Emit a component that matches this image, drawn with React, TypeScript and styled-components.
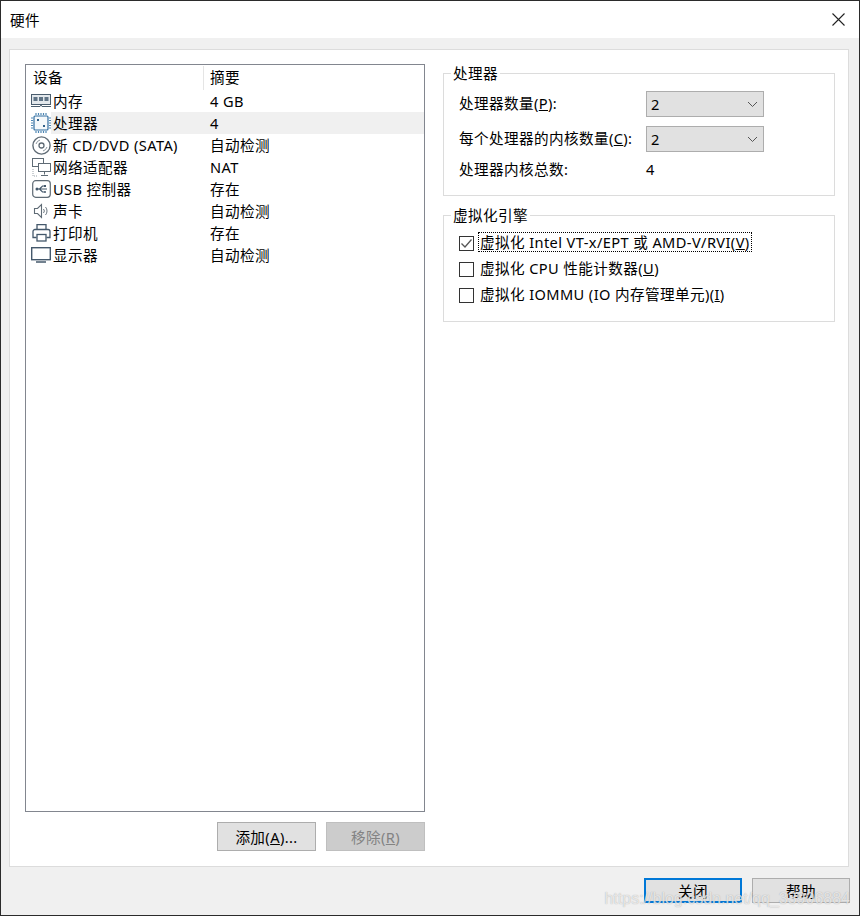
import styled, { createGlobalStyle } from "styled-components";

const GlobalStyle = createGlobalStyle`
  html, body {
    margin: 0;
    padding: 0;
    background: #f0f0f0;
  }
  * {
    box-sizing: border-box;
  }
`;

const Window = styled.div`
  position: relative;
  width: 860px;
  height: 916px;
  display: flex;
  flex-direction: column;
  overflow: hidden;
  background: #f0f0f0;
  border: 1px solid #2b2b2b;
  font-family: "Noto Sans", "Noto Sans CJK SC", sans-serif;
  font-size: 14.6px;
  letter-spacing: 0.4px;
  color: #000;
`;
const TitleBar = styled.div`
  height: 37px;
  flex: none;
  display: flex;
  align-items: center;
  justify-content: space-between;
  padding: 0 14px 0 9px;
  background: #fff;
`;
const CloseIcon = styled.svg`
  width: 13px;
  height: 13px;
  display: block;
`;
const Panel = styled.div`
  margin: 11px 10px 0 8px;
  height: 818px;
  flex: none;
  padding: 14px 13px 15px 15px;
  display: flex;
  gap: 18px;
  background: #fff;
  border: 1px solid #dcdcdc;
`;
const LeftColumn = styled.div`
  width: 400px;
  flex: none;
  display: flex;
  flex-direction: column;
`;
const DeviceList = styled.div`
  flex: 1;
  border: 1px solid #82868f;
  padding-top: 1px;
`;
const ListHeader = styled.div`
  height: 24px;
  display: grid;
  grid-template-columns: 177px 1fr;
`;
const HeaderCell = styled.div<{ $divider?: boolean }>`
  display: flex;
  align-items: center;
  padding-bottom: 3px;
  padding-left: ${(p) => (p.$divider ? "6px" : "7px")};
  border-left: ${(p) => (p.$divider ? "1px solid #e5e5e5" : "none")};
`;
const Row = styled.div`
  height: 22px;
  display: grid;
  grid-template-columns: 25px 1fr;
  align-items: center;
`;
const RowIcon = styled.div`
  display: flex;
  align-items: center;
  justify-content: center;
  height: 22px;
  padding-left: 5px;
`;
const RowBody = styled.div<{ $selected?: boolean }>`
  height: 22px;
  display: grid;
  grid-template-columns: 157px 1fr;
  align-items: center;
  padding: 0 0 2px 2px;
  background: ${(p) => (p.$selected ? "#f0f0f0" : "transparent")};
`;
const ListButtons = styled.div`
  margin-top: 10px;
  display: flex;
  justify-content: flex-end;
  gap: 10px;
`;
const Button = styled.div<{ $disabled?: boolean; $focused?: boolean }>`
  width: 99px;
  height: 29px;
  display: flex;
  align-items: center;
  justify-content: center;
  background: ${(p) => (p.$disabled ? "#cccccc" : "#e1e1e1")};
  color: ${(p) => (p.$disabled ? "#838383" : "#000")};
  border: ${(p) =>
    p.$focused
      ? "2px solid #0078d7"
      : p.$disabled
        ? "1px solid #bfbfbf"
        : "1px solid #adadad"};
`;
const RightColumn = styled.div`
  width: 392px;
  flex: none;
  display: flex;
  flex-direction: column;
  gap: 11px;
  padding-top: 1px;
`;
const GroupBox = styled.fieldset<{ $height: number; $top: number }>`
  margin: 0;
  padding: ${(p) => p.$top}px 15px 0;
  height: ${(p) => p.$height}px;
  border: 1px solid #dcdcdc;
  min-inline-size: 0;
`;
const Legend = styled.legend`
  margin-left: -8px;
  padding: 0 2px;
  line-height: 16px;
`;
const FormRow = styled.div`
  height: 26px;
  margin-bottom: 9px;
  display: grid;
  grid-template-columns: 187px 118px;
  align-items: center;
  white-space: nowrap;
`;
const TotalRow = styled(FormRow)`
  height: 18px;
  margin-bottom: 0;
`;
const FormLabel = styled.span`
  padding-bottom: 2px;
  line-height: 16px;
`;
const Combo = styled.div`
  height: 26px;
  display: flex;
  align-items: center;
  justify-content: space-between;
  padding: 0 5px 0 4px;
  background: #e1e1e1;
  border: 1px solid #adadad;
`;
const CheckRow = styled.div`
  height: 26px;
  display: flex;
  align-items: center;
  gap: 5px;
`;
const CheckBox = styled.div`
  width: 15px;
  height: 15px;
  flex: none;
  display: flex;
  align-items: center;
  justify-content: center;
  background: #fff;
  border: 1px solid #333;
`;
const CheckLabel = styled.span<{ $focused?: boolean }>`
  margin-bottom: 2px;
  padding: 0 1px;
  line-height: 18px;
  white-space: pre;
  outline: ${(p) => (p.$focused ? "1px dotted #000" : "none")};
`;
const Footer = styled.div`
  flex: 1;
  display: flex;
  justify-content: flex-end;
  gap: 10px;
  padding: 11px 9px 0 0;
`;
const FooterButton = styled(Button)`
  width: 98px;
  height: 25px;
`;
const Watermark = styled.div`
  position: absolute;
  right: 9px;
  bottom: 7px;
  font-family: "Liberation Sans", sans-serif;
  font-size: 16px;
  letter-spacing: 0;
  color: rgba(255, 255, 255, 0.7);
  text-shadow: 0 0 1px rgba(110, 110, 110, 0.6);
  white-space: nowrap;
`;

const Memory = () => (
  <svg width="20" height="14" viewBox="0 0 20 14" fill="none">
    <rect x="0.5" y="0.5" width="19" height="10" fill="#e3e8ec" stroke="#4a5d6e" />
    <rect x="2.500" y="3" width="4" height="4" fill="#5f7385" />
    <rect x="8" y="3" width="4" height="4" fill="#5f7385" />
    <rect x="13.500" y="3" width="4" height="4" fill="#5f7385" />
    <path d="M0 12.500h9l1-1.500 1 1.500h9" stroke="#4a5d6e" />
  </svg>
);
const Cpu = () => (
  <svg width="20" height="20" viewBox="0 0 20 20" fill="none">
    <rect x="3" y="3" width="14" height="14" rx="1" fill="#f4f8fb" stroke="#2f6da0" strokeWidth="1.200" />
    <path
      d="M5 0v2M7.500 0v2M10 0v2M12.500 0v2M15 0v2M5 18v2M7.500 18v2M10 18v2M12.500 18v2M15 18v2M0 5h2M0 7.500h2M0 10h2M0 12.500h2M0 15h2M18 5h2M18 7.500h2M18 10h2M18 12.500h2M18 15h2"
      stroke="#4d86b3"
      strokeWidth="1.200"
    />
    <rect x="6" y="6" width="2" height="2" fill="#2f5f88" />
    <rect x="12" y="12" width="2" height="2" fill="#2f5f88" />
  </svg>
);
const Disc = () => (
  <svg width="19" height="19" viewBox="0 0 19 19" fill="none">
    <circle cx="9.500" cy="9.500" r="8.600" fill="#fff" stroke="#5f6b75" strokeWidth="1.400" />
    <circle cx="9.500" cy="9.500" r="2.500" stroke="#5f6b75" strokeWidth="1.300" />
    <path d="M4 8A6 6 0 0 1 8 4M15 11a6 6 0 0 1-4 4" stroke="#8a949c" />
  </svg>
);
const Network = () => (
  <svg width="19" height="19" viewBox="0 0 19 19" fill="none">
    <rect x="0.500" y="0.500" width="11" height="8" fill="#fff" stroke="#5f6b75" />
    <rect x="6.500" y="5.500" width="12" height="8" fill="#fff" stroke="#5f6b75" />
    <path d="M12.500 14v2.500M9 17.500h7" stroke="#5f6b75" />
    <path d="M1 11v7h5" stroke="#9aa3aa" strokeDasharray="1 1" />
  </svg>
);
const Usb = () => (
  <svg width="19" height="18" viewBox="0 0 19 18" fill="none">
    <rect x="0.700" y="0.700" width="17.600" height="16.600" rx="3" fill="#fff" stroke="#5f6b75" strokeWidth="1.200" />
    <path d="M4 9h11M7.500 9l3-3h2M7.500 9l3 3h2" stroke="#44586b" strokeWidth="1.100" />
    <circle cx="5" cy="9" r="1.500" fill="#44586b" />
    <rect x="12" y="5" width="2" height="2" fill="#44586b" />
    <circle cx="13" cy="12" r="1" fill="#44586b" />
  </svg>
);
const Speaker = () => (
  <svg width="16" height="16" viewBox="0 0 16 16" fill="none">
    <path d="M1.500 5.500h3l4-4v13l-4-4h-3z" fill="#fff" stroke="#5f6b75" strokeWidth="1.100" />
    <path d="M10.500 6a3 3 0 0 1 0 4M12.500 4a6 6 0 0 1 0 8" stroke="#6c7780" />
  </svg>
);
const Printer = () => (
  <svg width="19" height="18" viewBox="0 0 19 18" fill="none">
    <path d="M5 5.500v-5h9v5" stroke="#44586b" strokeWidth="1.300" />
    <path d="M4.500 13.500H1v-6a2 2 0 0 1 2-2h13a2 2 0 0 1 2 2v6h-3.500" stroke="#44586b" strokeWidth="1.300" />
    <rect x="5" y="10.500" width="9" height="6.500" fill="#fff" stroke="#44586b" strokeWidth="1.300" />
  </svg>
);
const Monitor = () => (
  <svg width="20" height="16" viewBox="0 0 20 16" fill="none">
    <rect x="0.700" y="0.700" width="18.600" height="12" fill="#fff" stroke="#44586b" strokeWidth="1.400" />
    <path d="M5 15h10" stroke="#44586b" strokeWidth="1.500" />
  </svg>
);
const Chevron = () => (
  <svg width="11" height="7" viewBox="0 0 11 7" fill="none">
    <path d="M1 1l4.500 4.500L10 1" stroke="#555" />
  </svg>
);
const Check = () => (
  <svg width="13" height="11" viewBox="0 0 13 11" fill="none">
    <path d="M1.500 5.500l3.500 3.500 6.500-7.500" stroke="#555" strokeWidth="1.300" />
  </svg>
);

const devices = [
  { icon: <Memory />, name: "内存", summary: "4 GB" },
  { icon: <Cpu />, name: "处理器", summary: "4", selected: true },
  { icon: <Disc />, name: "新 CD/DVD (SATA)", summary: "自动检测" },
  { icon: <Network />, name: "网络适配器", summary: "NAT" },
  { icon: <Usb />, name: "USB 控制器", summary: "存在" },
  { icon: <Speaker />, name: "声卡", summary: "自动检测" },
  { icon: <Printer />, name: "打印机", summary: "存在" },
  { icon: <Monitor />, name: "显示器", summary: "自动检测" },
];

export default function App() {
  return (
    <Window>
      <GlobalStyle />
      <TitleBar>
        <span>硬件</span>
        <CloseIcon viewBox="0 0 13 13" fill="none">
          <path d="M0.500 0.500l12 12M12.500 0.500l-12 12" stroke="#222" strokeWidth="1.100" />
        </CloseIcon>
      </TitleBar>
      <Panel>
        <LeftColumn>
          <DeviceList>
            <ListHeader>
              <HeaderCell>设备</HeaderCell>
              <HeaderCell $divider>摘要</HeaderCell>
            </ListHeader>
            {devices.map((d) => (
              <Row key={d.name}>
                <RowIcon>{d.icon}</RowIcon>
                <RowBody $selected={d.selected}>
                  <span>{d.name}</span>
                  <span>{d.summary}</span>
                </RowBody>
              </Row>
            ))}
          </DeviceList>
          <ListButtons>
            <Button>
              <span>
                添加(<u>A</u>)...
              </span>
            </Button>
            <Button $disabled>
              <span>
                移除(<u>R</u>)
              </span>
            </Button>
          </ListButtons>
        </LeftColumn>
        <RightColumn>
          <GroupBox $height={131} $top={10}>
            <Legend>处理器</Legend>
            <FormRow>
              <FormLabel>
                处理器数量(<u>P</u>):
              </FormLabel>
              <Combo>
                2<Chevron />
              </Combo>
            </FormRow>
            <FormRow>
              <FormLabel>
                每个处理器的内核数量(<u>C</u>):
              </FormLabel>
              <Combo>
                2<Chevron />
              </Combo>
            </FormRow>
            <TotalRow>
              <FormLabel>处理器内核总数:</FormLabel>
              <FormLabel>4</FormLabel>
            </TotalRow>
          </GroupBox>
          <GroupBox $height={115} $top={7}>
            <Legend>虚拟化引擎</Legend>
            <CheckRow>
              <CheckBox>
                <Check />
              </CheckBox>
              <CheckLabel $focused>
                虚拟化 Intel VT-x/EPT 或 AMD-V/RVI(<u>V</u>)
              </CheckLabel>
            </CheckRow>
            <CheckRow>
              <CheckBox />
              <CheckLabel>
                虚拟化 CPU 性能计数器(<u>U</u>)
              </CheckLabel>
            </CheckRow>
            <CheckRow>
              <CheckBox />
              <CheckLabel>
                虚拟化 IOMMU (IO 内存管理单元)(<u>I</u>)
              </CheckLabel>
            </CheckRow>
          </GroupBox>
        </RightColumn>
      </Panel>
      <Footer>
        <FooterButton $focused>关闭</FooterButton>
        <FooterButton>帮助</FooterButton>
      </Footer>
      <Watermark>https://blog.csdn.net/qq_33906884</Watermark>
    </Window>
  );
}
